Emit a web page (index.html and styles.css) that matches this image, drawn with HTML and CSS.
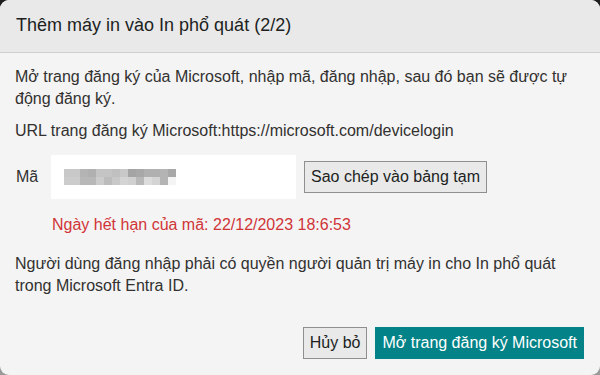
FILE: index.html
```html
<!DOCTYPE html>
<html lang="vi">
<head>
    <meta charset="UTF-8">
    <meta name="viewport" content="width=device-width, initial-scale=1.0">
    <title>Thêm máy in vào In phổ quát</title>
    <link rel="stylesheet" href="styles.css">
</head>
<body>
    <div class="dialog">
        <div class="dialog-header">Thêm máy in vào In phổ quát (2/2)</div>
        <div class="dialog-body">
            <p class="text">Mở trang đăng ký của Microsoft, nhập mã, đăng nhập, sau đó bạn sẽ được tự động đăng ký.</p>
            <p class="text url">URL trang đăng ký Microsoft:https://microsoft.com/devicelogin</p>
            <div class="code-row">
                <span class="code-label">Mã</span>
                <div class="code-box">
                    <svg class="blur" width="112" height="16" viewBox="0 0 112 16">
                        <rect x="0" y="0" width="8" height="8" fill="#c8c8c8"/>
                        <rect x="8" y="0" width="8" height="8" fill="#c8c8c8"/>
                        <rect x="16" y="0" width="8" height="8" fill="#b4b4b4"/>
                        <rect x="24" y="0" width="8" height="8" fill="#b0b0b0"/>
                        <rect x="32" y="0" width="8" height="8" fill="#c4c4c4"/>
                        <rect x="40" y="0" width="8" height="8" fill="#c4c4c4"/>
                        <rect x="48" y="0" width="8" height="8" fill="#c0c0c0"/>
                        <rect x="56" y="0" width="8" height="8" fill="#c8c8c8"/>
                        <rect x="64" y="0" width="8" height="8" fill="#a4a4a4"/>
                        <rect x="72" y="0" width="8" height="8" fill="#a8a8a8"/>
                        <rect x="80" y="0" width="8" height="8" fill="#b0b0b0"/>
                        <rect x="88" y="0" width="8" height="8" fill="#b0b0b0"/>
                        <rect x="96" y="0" width="8" height="8" fill="#b4b4b4"/>
                        <rect x="104" y="0" width="8" height="8" fill="#a8a8a8"/>
                        <rect x="0" y="8" width="8" height="8" fill="#cccccc"/>
                        <rect x="8" y="8" width="8" height="8" fill="#cccccc"/>
                        <rect x="16" y="8" width="8" height="8" fill="#b8b8b8"/>
                        <rect x="24" y="8" width="8" height="8" fill="#b8b8b8"/>
                        <rect x="32" y="8" width="8" height="8" fill="#cccccc"/>
                        <rect x="40" y="8" width="8" height="8" fill="#bcbcbc"/>
                        <rect x="48" y="8" width="8" height="8" fill="#c8c8c8"/>
                        <rect x="56" y="8" width="8" height="8" fill="#d4d4d4"/>
                        <rect x="64" y="8" width="8" height="8" fill="#d0d0d0"/>
                        <rect x="72" y="8" width="8" height="8" fill="#b8b8b8"/>
                        <rect x="80" y="8" width="8" height="8" fill="#dcdcdc"/>
                        <rect x="88" y="8" width="8" height="8" fill="#d4d4d4"/>
                        <rect x="96" y="8" width="8" height="8" fill="#b4b4b4"/>
                        <rect x="104" y="8" width="8" height="8" fill="#f4f4f4"/>
                    </svg>
                </div>
                <button class="btn">Sao chép vào bảng tạm</button>
            </div>
            <p class="expiry">Ngày hết hạn của mã: 22/12/2023 18:6:53</p>
            <p class="text note">Người dùng đăng nhập phải có quyền người quản trị máy in cho In phổ quát trong Microsoft Entra ID.</p>
        </div>
        <div class="dialog-footer">
            <button class="btn">Hủy bỏ</button>
            <button class="btn btn-primary">Mở trang đăng ký Microsoft</button>
        </div>
    </div>
</body>
</html>
```

FILE: styles.css
```css
body {
    margin: 0;
    padding: 0;
    height: 375px;
    background: linear-gradient(#1e1e1e, #9a9a9a);
    font-family: "Liberation Sans", Arial, sans-serif;
    color: #323130;
}

.dialog {
    height: 375px;
    background-color: #f4f4f4;
    border-radius: 9px;
    overflow: hidden;
    display: flex;
    flex-direction: column;
}

.dialog-header {
    height: 53px;
    box-sizing: border-box;
    padding: 0 16px 1px 16px;
    display: flex;
    align-items: center;
    background-color: #e9e9e9;
    border-bottom: 1px solid #cfcfcf;
    font-size: 18px;
    color: #201f1e;
}

.dialog-body {
    flex: 1;
    padding: 13px 15px 0 15px;
}

.text {
    margin: 0;
    font-size: 16px;
    line-height: 22px;
}

.url {
    margin-top: 10px;
}

.code-row {
    display: flex;
    align-items: center;
    margin-top: 13px;
}

.code-label {
    width: 35px;
    padding-left: 1px;
    font-size: 16px;
}

.code-box {
    width: 245px;
    height: 44px;
    background-color: #fff;
    display: flex;
    align-items: center;
    padding-left: 13px;
    box-sizing: border-box;
}

.blur {
    display: block;
}

.btn {
    font-family: "Liberation Sans", Arial, sans-serif;
    font-size: 16px;
    color: #201f1e;
    background-color: #e9e9e9;
    border: 1px solid #8f8f8f;
    height: 32px;
    padding: 0 6px;
    margin: 0;
}

.code-row .btn {
    margin-left: 8px;
}

.expiry {
    margin: 15px 0 0 37px;
    font-size: 16px;
    line-height: 22px;
    color: #d13438;
}

.note {
    margin-top: 17px;
}

.dialog-footer {
    display: flex;
    justify-content: flex-end;
    gap: 8px;
    padding: 0 16px 16px 0;
}

.btn-primary {
    background-color: #038387;
    border-color: #038387;
    color: #fff;
}
```
